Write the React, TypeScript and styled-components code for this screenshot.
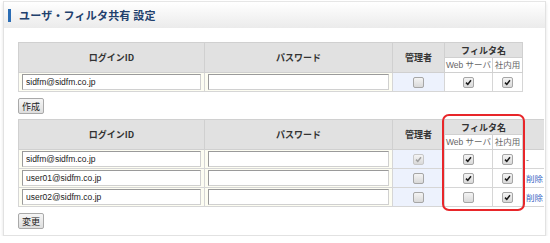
import styled, { createGlobalStyle } from "styled-components";

const GlobalStyle = createGlobalStyle`
  body {
    margin: 0;
    background: #fff;
    font-family: "Liberation Sans", "Noto Sans CJK JP", sans-serif;
  }
`;

const Panel = styled.div`
  position: relative;
  margin: 1px 4px 0 3px;
  height: 234px;
  border: 1px solid #e2e2e2;
  border-top: none;
  background: #fff;
  box-shadow: 0 2px 3px rgba(0, 0, 0, 0.12);
`;

const Header = styled.div`
  display: flex;
  align-items: center;
  gap: 8px;
  height: 26px;
  padding-left: 4px;
  background: linear-gradient(#ffffff, #ebebeb);
  border-top: 1px solid #e6e6e6;
`;

const HeaderMark = styled.span`
  width: 3px;
  height: 13px;
  background: #2b6db5;
`;

const Title = styled.h1`
  margin: 0;
  font-family: "Noto Sans CJK JP", sans-serif;
  font-size: 11px;
  font-weight: 700;
  color: #21406d;
  letter-spacing: 0.2px;
`;

const Body = styled.div`
  padding: 14px 0 0 14px;
`;

const Table = styled.table<{ $width: number }>`
  width: ${(p) => p.$width}px;
  border-collapse: collapse;
  table-layout: fixed;
  font-size: 9px;
`;

const Col = styled.col<{ $w: number }>`
  width: ${(p) => p.$w}px;
`;

const Th = styled.th<{ $sub?: boolean }>`
  height: 14px;
  padding: 0;
  border: 1px solid #d0d0d0;
  background: ${(p) => (p.$sub ? "#fff" : "#e1e1e1")};
  color: ${(p) => (p.$sub ? "#666" : "#333")};
  font-family: ${(p) =>
    p.$sub ? `"Liberation Sans", "Noto Sans CJK JP", sans-serif` : `"Noto Sans CJK JP", sans-serif`};
  font-weight: ${(p) => (p.$sub ? 400 : 700)};
  font-size: ${(p) => (p.$sub ? 8.5 : 9)}px;
  line-height: 13px;
  text-align: center;
  white-space: nowrap;
  overflow: hidden;
`;

const BlankTh = styled.th`
  border: 1px solid #d0d0d0;
  border-right: none;
  background: #e1e1e1;
`;

type Tone = "text" | "admin" | "plain";

const Td = styled.td<{ $tone: Tone }>`
  height: 18px;
  padding: 0 3px;
  border: 1px solid #d6d6d6;
  background: ${(p) =>
    p.$tone === "text" ? "#fdfdf2" : p.$tone === "admin" ? "#edf2fd" : "#fff"};
  text-align: center;
  vertical-align: middle;
`;

const ActionTd = styled.td<{ $muted: boolean }>`
  padding: 0 0 0 3px;
  border-top: 1px solid #d6d6d6;
  border-bottom: 1px solid #d6d6d6;
  font-family: "Noto Sans CJK JP", sans-serif;
  font-size: 8.5px;
  color: ${(p) => (p.$muted ? "#555" : "#3a68c4")};
  text-align: left;
  white-space: nowrap;
`;

const Field = styled.input`
  display: block;
  box-sizing: border-box;
  width: 100%;
  height: 16px;
  margin: 0;
  padding: 0 3px;
  border: 1px solid #9a9a9a;
  border-right-color: #d0d0d0;
  border-bottom-color: #d0d0d0;
  background: #fff;
  font-family: "Liberation Sans", sans-serif;
  font-size: 8.5px;
  color: #222;
  outline: none;
`;

const Box = styled.span<{ $dim?: boolean }>`
  display: inline-block;
  position: relative;
  width: 9px;
  height: 9px;
  border: 1px solid ${(p) => (p.$dim ? "#c8c8c8" : "#a6a6a6")};
  border-radius: 2px;
  background: linear-gradient(#f4f4f4, #d9d9d9);
  vertical-align: middle;
  svg {
    position: absolute;
    left: 1px;
    top: 1px;
  }
`;

const Button = styled.button`
  display: block;
  height: 16px;
  margin: 6px 0 0;
  padding: 0 3px;
  border: 1px solid #a9a9a9;
  border-radius: 2px;
  background: linear-gradient(#f6f6f6, #dedede);
  font-family: "Noto Sans CJK JP", sans-serif;
  font-size: 9px;
  color: #222;
`;

const Gap = styled.div`
  height: 5px;
`;

const Highlight = styled.div`
  position: absolute;
  left: 438px;
  top: 113px;
  width: 79px;
  height: 93px;
  border: 2px solid #e8262a;
  border-radius: 7px;
`;

const Check = ({ on, dim }: { on: boolean; dim?: boolean }) => (
  <Box $dim={dim}>
    {on && (
      <svg width="7" height="7" viewBox="0 0 7 7">
        <path
          d="M1 3.6 L2.8 5.4 L6 1.2"
          fill="none"
          stroke={dim ? "#a0a0a0" : "#1a1a1a"}
          strokeWidth="1.5"
        />
      </svg>
    )}
  </Box>
);

type User = {
  id: string;
  admin: boolean;
  adminDim?: boolean;
  web: boolean;
  inner: boolean;
  action: string;
};

const users: User[] = [
  { id: "sidfm@sidfm.co.jp", admin: true, adminDim: true, web: true, inner: true, action: "-" },
  { id: "user01@sidfm.co.jp", admin: false, web: true, inner: true, action: "削除" },
  { id: "user02@sidfm.co.jp", admin: false, web: false, inner: true, action: "削除" },
];

const Cols = ({ extra }: { extra?: boolean }) => (
  <colgroup>
    <Col $w={186} />
    <Col $w={188} />
    <Col $w={52} />
    <Col $w={48} />
    <Col $w={30} />
    {extra && <Col $w={21} />}
  </colgroup>
);

const HeadRows = ({ extra }: { extra?: boolean }) => (
  <thead>
    <tr>
      <Th rowSpan={2}>ログインID</Th>
      <Th rowSpan={2}>パスワード</Th>
      <Th rowSpan={2}>管理者</Th>
      <Th colSpan={2}>フィルタ名</Th>
      {extra && <BlankTh rowSpan={2} />}
    </tr>
    <tr>
      <Th $sub>Web サーバ</Th>
      <Th $sub>社内用</Th>
    </tr>
  </thead>
);

export default function App() {
  return (
    <>
      <GlobalStyle />
      <Panel>
        <Header>
          <HeaderMark />
          <Title>ユーザ・フィルタ共有 設定</Title>
        </Header>
        <Body>
          <Table $width={504}>
            <Cols />
            <HeadRows />
            <tbody>
              <tr>
                <Td $tone="text">
                  <Field defaultValue="sidfm@sidfm.co.jp" />
                </Td>
                <Td $tone="text">
                  <Field type="password" />
                </Td>
                <Td $tone="admin">
                  <Check on={false} />
                </Td>
                <Td $tone="plain">
                  <Check on />
                </Td>
                <Td $tone="plain">
                  <Check on />
                </Td>
              </tr>
            </tbody>
          </Table>
          <Button>作成</Button>
          <Gap />
          <Table $width={525}>
            <Cols extra />
            <HeadRows extra />
            <tbody>
              {users.map((u) => (
                <tr key={u.id}>
                  <Td $tone="text">
                    <Field defaultValue={u.id} />
                  </Td>
                  <Td $tone="text">
                    <Field type="password" />
                  </Td>
                  <Td $tone="admin">
                    <Check on={u.admin} dim={u.adminDim} />
                  </Td>
                  <Td $tone="plain">
                    <Check on={u.web} />
                  </Td>
                  <Td $tone="plain">
                    <Check on={u.inner} />
                  </Td>
                  <ActionTd $muted={u.action === "-"}>{u.action}</ActionTd>
                </tr>
              ))}
            </tbody>
          </Table>
          <Button>変更</Button>
        </Body>
        <Highlight />
      </Panel>
    </>
  );
}
